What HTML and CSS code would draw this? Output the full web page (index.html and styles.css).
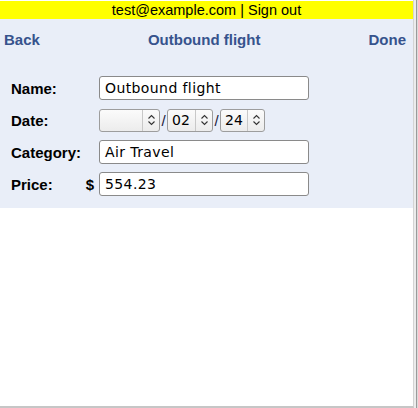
FILE: index.html
```html
<!DOCTYPE html>
<html>
<head>
<meta charset="utf-8">
<link rel="stylesheet" href="styles.css">
</head>
<body>
<div class="app">
  <div class="userbar">test@example.com | Sign out</div>
  <div class="panel">
    <div class="toolbar">
      <span class="tb-link">Back</span>
      <span class="tb-title">Outbound flight</span>
      <span class="tb-link">Done</span>
    </div>
    <div class="form">
      <div class="label">Name:</div>
      <div class="field"><div class="input">Outbound flight</div></div>

      <div class="label">Date:</div>
      <div class="field date">
        <div class="spin w-month"><span class="spin-val"></span><span class="spin-btn"><svg width="9" height="12" viewBox="0 0 9 12"><path d="M1.5 4.5 L4.5 1.5 L7.5 4.5 M1.5 7.5 L4.5 10.5 L7.5 7.5" fill="none" stroke="#333" stroke-width="1.1"/></svg></span></div>
        <span class="slash">/</span>
        <div class="spin w-day"><span class="spin-val">02</span><span class="spin-btn"><svg width="9" height="12" viewBox="0 0 9 12"><path d="M1.5 4.5 L4.5 1.5 L7.5 4.5 M1.5 7.5 L4.5 10.5 L7.5 7.5" fill="none" stroke="#333" stroke-width="1.1"/></svg></span></div>
        <span class="slash">/</span>
        <div class="spin w-year"><span class="spin-val">24</span><span class="spin-btn"><svg width="9" height="12" viewBox="0 0 9 12"><path d="M1.5 4.5 L4.5 1.5 L7.5 4.5 M1.5 7.5 L4.5 10.5 L7.5 7.5" fill="none" stroke="#333" stroke-width="1.1"/></svg></span></div>
      </div>

      <div class="label">Category:</div>
      <div class="field"><div class="input">Air Travel</div></div>

      <div class="label label-price"><span>Price:</span><span>$</span></div>
      <div class="field"><div class="input">554.23</div></div>
    </div>
  </div>
</div>
</body>
</html>
```

FILE: styles.css
```css
html, body {
  margin: 0;
  padding: 0;
  background: #ffffff;
}

.app {
  width: 413px;
  height: 405px;
  padding-top: 1px;
  border-right: 1px solid #d4d4d4;
  border-bottom: 2px solid #c6c6c6;
  box-shadow: 2px 0 0 #ececec, 3px 0 0 #9a9a9a, 4px 0 0 #dcdcdc;
  font-family: "Liberation Sans", Arial, sans-serif;
  color: #000;
}

.userbar {
  height: 18px;
  line-height: 18px;
  background: #ffff00;
  text-align: center;
  font-size: 14.5px;
}

.panel {
  background: #e9eef8;
  padding-bottom: 12px;
}

.toolbar {
  height: 41px;
  display: flex;
  align-items: center;
  justify-content: space-between;
  padding: 0 7px 0 4px;
  font-weight: bold;
  font-size: 15px;
  color: #36538d;
}

.form {
  display: grid;
  grid-template-columns: 88px 210px;
  row-gap: 8px;
  padding: 16px 0 0 11px;
}

.label {
  font-weight: bold;
  font-size: 15px;
  height: 24px;
  display: flex;
  align-items: center;
}

.label-price {
  justify-content: space-between;
  padding-right: 5px;
}

.field {
  display: flex;
  align-items: center;
  height: 24px;
}

.input {
  box-sizing: border-box;
  width: 210px;
  height: 24px;
  border: 1px solid #8a8a8a;
  border-radius: 3px;
  background: #fff;
  padding: 0 5px;
  font-family: "DejaVu Sans", sans-serif;
  font-size: 14px;
  letter-spacing: 0.4px;
  line-height: 22px;
  color: #000;
}

.date {
  gap: 0;
}

.spin {
  box-sizing: border-box;
  height: 23px;
  display: flex;
  border: 1px solid #9d9d9d;
  border-radius: 3px;
  background: linear-gradient(#fbfbfb, #ececec);
  font-family: "DejaVu Sans", sans-serif;
  font-size: 14px;
}

.w-month { width: 61px; }
.w-day { width: 46px; }
.w-year { width: 45px; }

.spin-val {
  flex: 1;
  line-height: 21px;
  padding-left: 4px;
}

.spin-btn {
  width: 16px;
  border-left: 1px solid #c8c8c8;
  display: flex;
  align-items: center;
  justify-content: center;
}

.slash {
  width: 7px;
  text-align: center;
  font-size: 15px;
  color: #1a1a3a;
}
```
